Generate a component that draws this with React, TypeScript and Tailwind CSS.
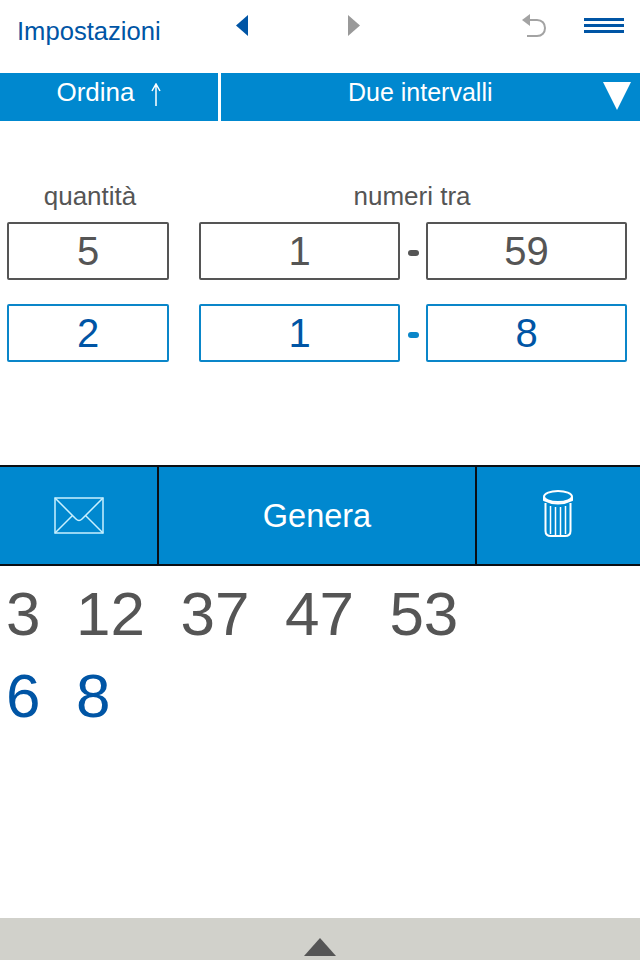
import type { ReactNode } from "react";

function NumBox({ value, blue, className }: { value: string; blue?: boolean; className: string }) {
  return (
    <div
      className={`h-[58px] flex items-center justify-center rounded-[2px] border-2 text-[40px] leading-none ${className} ${
        blue ? "border-[#0a86c9] text-[#0055a5]" : "border-[#555555] text-[#555555]"
      }`}
    >
      {value}
    </div>
  );
}

function Dash({ blue }: { blue?: boolean }) {
  return (
    <div className="w-[26px] flex items-center justify-center pt-[3px]">
      <div className={`w-[11px] h-[6px] rounded-full ${blue ? "bg-[#0a86c9]" : "bg-[#555555]"}`} />
    </div>
  );
}

function Row({ values, blue, className }: { values: string[]; blue?: boolean; className?: string }) {
  return (
    <div className={`flex pl-[7px] ${className ?? ""}`}>
      <NumBox value={values[0]} blue={blue} className="w-[162px] mr-[30px]" />
      <NumBox value={values[1]} blue={blue} className="w-[201px]" />
      <Dash blue={blue} />
      <NumBox value={values[2]} blue={blue} className="w-[201px]" />
    </div>
  );
}

function Numbers({ children, className }: { children: ReactNode; className: string }) {
  return <div className={`flex gap-[35.5px] pl-[6px] text-[62px] leading-[82px] ${className}`}>{children}</div>;
}

export default function App() {
  return (
    <div className="w-[640px] h-[960px] flex flex-col bg-white overflow-hidden font-['Liberation_Sans',Arial,sans-serif]">
      <header className="h-[73px] flex items-start">
        <span className="ml-[17px] mt-[16px] w-[145px] text-[25.6px] leading-[30px] text-[#0055a5]">Impostazioni</span>
        <svg className="ml-[74px] mt-[15px]" width="12" height="21" viewBox="0 0 12 21">
          <path d="M12 0V21L0 10.5Z" fill="#0055a5" />
        </svg>
        <svg className="ml-[100px] mt-[15px]" width="12" height="21" viewBox="0 0 12 21">
          <path d="M0 0V21L12 10.5Z" fill="#999999" />
        </svg>
        <svg className="ml-[161px] mt-[13px]" width="26" height="26" viewBox="0 0 26 26" fill="none">
          <path d="M9 1V13L1 7Z" fill="#a3a3a3" />
          <path d="M8 7H16C21 7 24 10.5 24 15C24 19.5 21 23 16 23H6" stroke="#a3a3a3" strokeWidth="2" />
        </svg>
        <div className="ml-[37px] mt-[18px] w-[40px] flex flex-col gap-[3px]">
          <div className="h-[3px] bg-[#0055a5]" />
          <div className="h-[3px] bg-[#0055a5]" />
          <div className="h-[3px] bg-[#0055a5]" />
        </div>
      </header>

      <nav className="h-[48px] flex gap-[3px] text-white text-[26px] leading-[38px]">
        <div className="w-[218px] bg-[#0088cf] flex justify-center gap-[15px]">
          <span>Ordina</span>
          <svg className="mt-[10px]" width="12" height="24" viewBox="0 0 12 24" fill="none">
            <path d="M6 23V2M2 8L6 1L10 8" stroke="white" strokeWidth="1.5" />
          </svg>
        </div>
        <div className="flex-1 bg-[#0088cf] flex relative">
          <span className="ml-[127px] text-[25px]">Due intervalli</span>
          <svg className="absolute right-[9px] top-[9px]" width="28" height="28" viewBox="0 0 28 28">
            <path d="M0 0H28L14 28Z" fill="white" />
          </svg>
        </div>
      </nav>

      <main className="h-[344px] text-[#555555]">
        <div className="flex pt-[60px] text-[26px] leading-[30px]">
          <span className="w-[180px] text-center">quantità</span>
          <span className="w-[428px] ml-[18px] text-center">numeri tra</span>
        </div>
        <Row values={["5", "1", "59"]} className="mt-[11px]" />
        <Row values={["2", "1", "8"]} blue className="mt-[24px]" />
      </main>

      <section className="h-[101px] flex bg-[#0088cf] border-y-2 border-[#0a0f14] text-white">
        <div className="w-[157px] flex items-center justify-center">
          <svg width="50" height="37" viewBox="0 0 50 37" fill="none" stroke="#c8f0ff" strokeWidth="1.5">
            <path d="M1 1H49V36H1Z" />
            <path d="M1 1L22 22Q25 25 28 22L49 1" />
            <path d="M1 36L18.5 18.5M49 36L31.5 18.5" />
          </svg>
        </div>
        <div className="w-[320px] border-x-2 border-[#0a0f14] flex items-center justify-center pt-[2px] text-[32.5px]">
          Genera
        </div>
        <div className="flex-1 flex items-center justify-center pr-[2px] pb-[5px]">
          <svg width="30" height="47" viewBox="0 0 30 47" fill="none" stroke="white" strokeWidth="2">
            <ellipse cx="15" cy="6.5" rx="14" ry="5.5" />
            <path d="M1 7V10Q15 17 29 10V7" />
            <path d="M2.5 13V41Q2.5 46 8 46H22Q27.5 46 27.5 41V13" />
            <path d="M7.5 16V44M12.5 17V45M17.5 17V45M22.5 16V44" strokeWidth="1.5" />
          </svg>
        </div>
      </section>

      <section className="flex-1 pt-[7px]">
        <Numbers className="text-[#555555]">
          <span>3</span>
          <span>12</span>
          <span>37</span>
          <span>47</span>
          <span>53</span>
        </Numbers>
        <Numbers className="text-[#0055a5]">
          <span>6</span>
          <span>8</span>
        </Numbers>
      </section>

      <footer className="h-[42px] bg-[#d1d1cb] flex justify-center pt-[20px]">
        <svg width="32" height="18" viewBox="0 0 32 18">
          <path d="M16 0L32 18H0Z" fill="#555555" />
        </svg>
      </footer>
    </div>
  );
}
